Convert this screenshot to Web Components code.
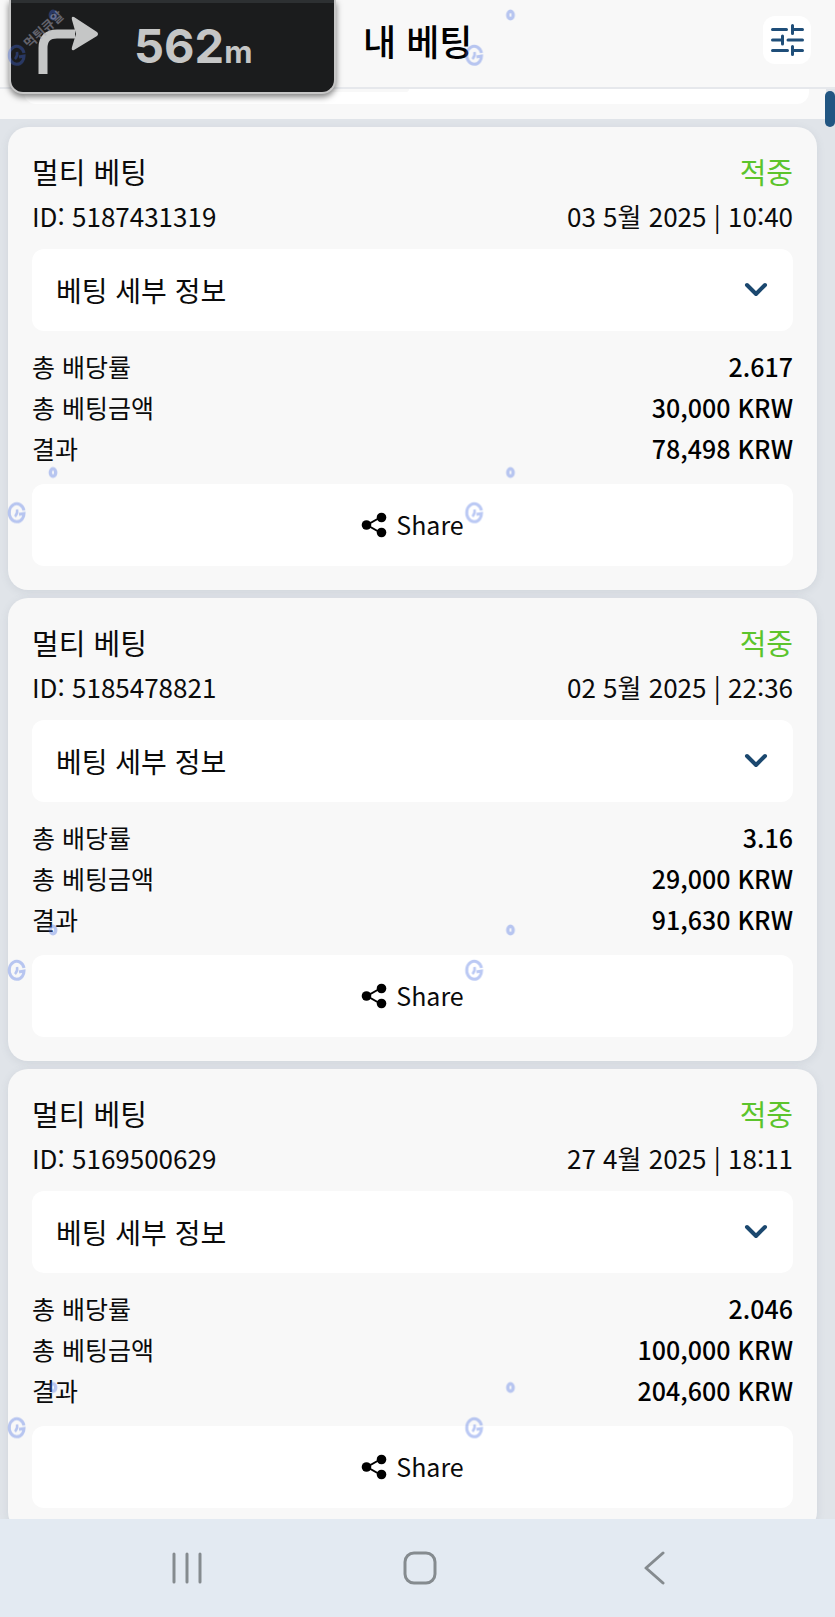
<!DOCTYPE html>
<html lang="ko">
<head>
<meta charset="utf-8">
<meta name="viewport" content="width=device-width, initial-scale=1">
<title>내 베팅</title>
<style>
html, body { margin: 0; height: 100%; }
body { font-family: "Noto Sans CJK KR", "Noto Sans", sans-serif; color: #0b0b0b; overflow: hidden; }
</style>
</head>
<body>
<bet-app></bet-app>
<script>
const define = (name, html, setup) => {
  const tpl = document.createElement('template');
  tpl.innerHTML = html;
  customElements.define(name, class extends HTMLElement {
    constructor() {
      super();
      this.attachShadow({ mode: 'open' }).append(tpl.content.cloneNode(true));
    }
    connectedCallback() { if (setup) setup(this, this.shadowRoot); }
  });
};

define('app-header', `
<style>
:host { display: block; background: #f8f8f8; border-bottom: 2px solid #e6e8ec; }
header { display: flex; align-items: center; justify-content: space-between; box-sizing: border-box; height: 87px; padding: 0 24px 7px 363px; }
h1 { margin: 0; font-size: 36px; line-height: 48px; font-weight: 500; color: #000; }
button { display: grid; place-items: center; width: 48px; height: 48px; padding: 0; border: 0; border-radius: 12px; background: #fff; }
</style>
<header>
  <h1><slot></slot></h1>
  <button type="button" aria-label="필터">
    <svg width="34" height="34" viewBox="0 0 34 34" fill="none" stroke="#1f4e79" stroke-width="3" stroke-linecap="round">
      <path d="M2.500 6.500h14M22.500 6.500h10M22.500 2.500v8M2.500 17h10M12.500 13v8M18 17h14.500M2.500 27.500h15M22.500 27.500h10M22.500 23.500v8"/>
    </svg>
  </button>
</header>`);

define('route-widget', `
<style>
:host { display: block; box-sizing: border-box; height: 94px; width: 327px; border: 2px solid #c6c6c6; border-top: 0; border-radius: 0 0 14px 14px; background: #1b1c1d; box-shadow: 0 3px 6px rgba(0,0,0,.5); color: #c5c6c6; font-family: Inter, sans-serif; }
.row { display: flex; align-items: center; gap: 35px; height: 88px; border-top: 3px solid #2d3032; padding-left: 26px; }
p { margin: 0; padding-top: 4px; font-size: 47px; line-height: 56px; font-weight: 700; }
small { font-size: 31px; }
svg { margin-bottom: 2px; }
</style>
<div class="row">
  <svg width="62" height="60" viewBox="0 0 62 60">
    <path d="M6 58V32Q6 18 20 18H38" fill="none" stroke="#c5c6c6" stroke-width="9"/>
    <path d="M37 1L60 16Q62 18 60 20L37 34Q34 35 35 31L39 18L35 4Q34 0 37 1Z" fill="#c5c6c6"/>
  </svg>
  <p>562<small>m</small></p>
</div>`);

define('bet-details', `
<style>
:host { display: block; }
button { display: flex; align-items: center; justify-content: space-between; width: 100%; height: 82px; padding: 0 24px; border: 0; border-radius: 12px; background: #fff; color: inherit; font: inherit; font-size: 28px; }
</style>
<button type="button" aria-expanded="false"><span><slot></slot></span>
  <svg width="26" height="16" viewBox="0 0 26 16" fill="none" stroke="#1b486f" stroke-width="4" stroke-linecap="round" stroke-linejoin="round"><path d="M4 3l9 9 9-9"/></svg>
</button>`);

define('share-button', `
<style>
:host { display: block; }
button { display: flex; align-items: center; justify-content: center; gap: 9px; width: 100%; height: 82px; padding: 0; border: 0; border-radius: 12px; background: #fff; color: inherit; font: inherit; font-size: 25px; }
span { padding-bottom: 3px; }
</style>
<button type="button">
  <svg width="26" height="26" viewBox="0 0 26 26"><path d="M20 5L6 13l14 8" fill="none" stroke="#000" stroke-width="2"/><circle cx="20.500" cy="5.500" r="4.800"/><circle cx="5.500" cy="13" r="4.800"/><circle cx="20.500" cy="20.500" r="4.800"/></svg>
  <span><slot></slot></span>
</button>`);

define('bet-card', `
<style>
:host { display: block; flex: none; padding: 24px; border-radius: 20px; background: #f8f8f8; box-shadow: 0 2px 8px rgba(90,110,120,.12); }
.line { display: flex; align-items: center; justify-content: space-between; }
.top { height: 40px; font-size: 29px; }
h2 { margin: 0; font: inherit; }
.status { color: #5cc42c; }
.meta { height: 48px; margin-bottom: 10px; font-size: 26px; }
dl { margin: 14px 0 16px; font-size: 25px; }
dl .line { height: 41px; }
dd { margin: 0; font-weight: 500; color: #000; }
</style>
<div class="line top"><h2>멀티 베팅</h2><span class="status">적중</span></div>
<div class="line meta"><span class="id"></span><time></time></div>
<bet-details>베팅 세부 정보</bet-details>
<dl>
  <div class="line"><dt>총 배당률</dt><dd class="odds"></dd></div>
  <div class="line"><dt>총 베팅금액</dt><dd class="stake"></dd></div>
  <div class="line"><dt>결과</dt><dd class="result"></dd></div>
</dl>
<share-button>Share</share-button>`, (el, root) => {
  root.querySelector('.id').textContent = 'ID: ' + el.getAttribute('bet-id');
  root.querySelector('time').textContent = el.getAttribute('date');
  for (const k of ['odds', 'stake', 'result']) root.querySelector('.' + k).textContent = el.getAttribute(k);
});

define('system-nav', `
<style>
:host { display: block; background: #e3eaf2; }
nav { display: grid; grid-template-columns: repeat(3, 1fr); height: 98px; padding: 0 64px 0 70px; }
button { display: grid; place-items: center; padding: 0; border: 0; background: none; }
svg { fill: none; stroke: #858b8f; stroke-width: 3; stroke-linecap: round; stroke-linejoin: round; }
</style>
<nav aria-label="시스템">
  <button type="button" aria-label="최근 앱"><svg width="34" height="34"><path d="M4 3v28M17 3v28M30 3v28"/></svg></button>
  <button type="button" aria-label="홈"><svg width="34" height="34"><rect x="2" y="2" width="30" height="30" rx="9"/></svg></button>
  <button type="button" aria-label="뒤로"><svg width="34" height="34"><path d="M26 2L9 17l17 15"/></svg></button>
</nav>`);

define('mark-layer', `
<style>
:host { display: block; pointer-events: none; }
svg { display: block; width: 100%; height: 100%; }
</style>
<svg aria-hidden="true">
  <defs>
    <pattern id="m" width="457.500" height="457.500" patternUnits="userSpaceOnUse">
      <g fill="none" stroke="#4169e1" opacity=".36">
        <path d="M24 53A7.500 9 0 1 0 22.500 61Q24 59 24 56L19 57" stroke-width="3"/>
        <path d="M17 52q1 4-2 7" stroke-width="2.500"/>
        <ellipse cx="53" cy="15" rx="2.700" ry="3.700" stroke-width="3.400"/>
      </g>
    </pattern>
  </defs>
  <rect width="100%" height="100%" fill="url(#m)"/>
  <text transform="translate(29 49) rotate(-42)" font-size="13" font-weight="700" fill="#aab" opacity=".5">먹튀큐알</text>
</svg>`);

define('bet-app', `
<style>
:host { position: relative; display: flex; flex-direction: column; height: 100vh; overflow: hidden; background: #e0e4e9; }
main { flex: 1; min-height: 0; overflow: hidden; display: flex; flex-direction: column; gap: 8px; }
.previous { flex: none; margin-right: 9px; padding: 0 17px 15px 24px; background: #f8f8f8; }
.sheet { height: 15px; border-radius: 0 0 12px 12px; background: #fff; }
.tab { width: 49%; height: 3px; border-radius: 0 0 12px 0; background: #f8f8f8; }
.list { display: flex; flex-direction: column; gap: 8px; padding: 0 18px 0 8px; }
route-widget { position: absolute; top: 0; left: 9px; }
mark-layer { position: absolute; inset: 0; }
.thumb { position: absolute; top: 91px; right: 0; width: 10px; height: 36px; border-radius: 5px; background: #225682; }
</style>
<app-header>내 베팅</app-header>
<main>
  <div class="previous"><div class="sheet"><div class="tab"></div></div></div>
  <div class="list">
    <bet-card bet-id="5187431319" date="03 5월 2025 | 10:40" odds="2.617" stake="30,000 KRW" result="78,498 KRW"></bet-card>
    <bet-card bet-id="5185478821" date="02 5월 2025 | 22:36" odds="3.16" stake="29,000 KRW" result="91,630 KRW"></bet-card>
    <bet-card bet-id="5169500629" date="27 4월 2025 | 18:11" odds="2.046" stake="100,000 KRW" result="204,600 KRW"></bet-card>
  </div>
</main>
<system-nav></system-nav>
<route-widget></route-widget>
<div class="thumb"></div>
<mark-layer></mark-layer>`);
</script>
</body>
</html>
